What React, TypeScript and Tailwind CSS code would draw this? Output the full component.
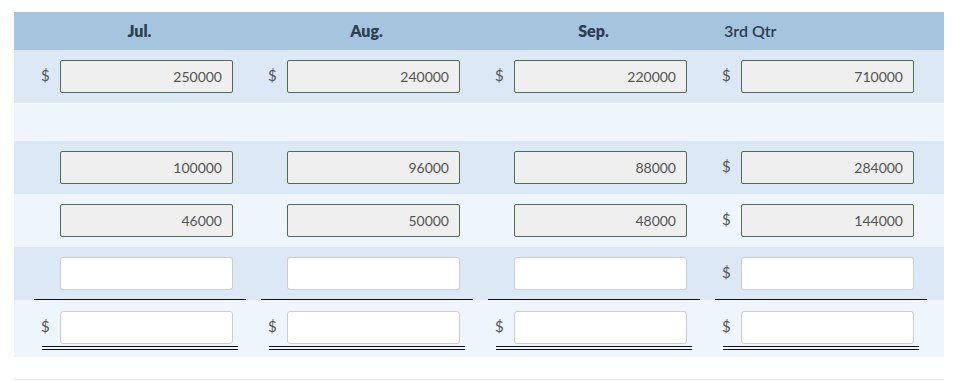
import React from "react";

type Cell = {
  dollar?: boolean;
  value?: string;
};

type Row = {
  cells: Cell[] | null;
  line?: "single" | "double";
  tone: "dark" | "light";
};

const months = ["Jul.", "Aug.", "Sep."];

const rows: Row[] = [
  {
    tone: "dark",
    cells: [
      { dollar: true, value: "250000" },
      { dollar: true, value: "240000" },
      { dollar: true, value: "220000" },
      { dollar: true, value: "710000" },
    ],
  },
  { tone: "light", cells: null },
  {
    tone: "dark",
    cells: [
      { value: "100000" },
      { value: "96000" },
      { value: "88000" },
      { dollar: true, value: "284000" },
    ],
  },
  {
    tone: "light",
    cells: [
      { value: "46000" },
      { value: "50000" },
      { value: "48000" },
      { dollar: true, value: "144000" },
    ],
  },
  {
    tone: "dark",
    line: "single",
    cells: [{}, {}, {}, { dollar: true }],
  },
  {
    tone: "light",
    line: "double",
    cells: [{ dollar: true }, { dollar: true }, { dollar: true }, { dollar: true }],
  },
];

function AmountField({ cell }: { cell: Cell }) {
  const filled = cell.value !== undefined;
  return (
    <div className="flex items-center h-[33px]">
      <span className="w-[34px] pl-[15px] text-[15px] text-[#555] -mt-[2px]">
        {cell.dollar ? "$" : ""}
      </span>
      {filled ? (
        <div className="w-[173px] h-[33px] bg-[#efefef] border border-[#4e6e54] rounded-[2px] flex items-center justify-end pr-[10px] text-[14px] text-[#555]">
          {cell.value}
        </div>
      ) : (
        <div className="w-[173px] h-[33px] bg-white border border-[#cdcdcd] rounded-[3px]" />
      )}
    </div>
  );
}

export default function App() {
  return (
    <div
      className="w-[953px] h-[381px] bg-white pt-[12px] pl-[14px]"
      style={{ fontFamily: "Lato, 'Open Sans', sans-serif" }}
    >
      <div className="w-[930px]">
        {/* HEADER */}
        <div className="h-[38px] bg-[#a5c5df] flex items-center pl-[12px] text-[#2c3e50] text-[16px]">
          {months.map((m) => (
            <div key={m} className="w-[227px] text-center font-extrabold">
              {m}
            </div>
          ))}
          <div className="w-[227px] pl-[17px] font-semibold">3rd Qtr</div>
        </div>

        {/* BODY */}
        {rows.map((row, i) => {
          const bg = row.tone === "dark" ? "bg-[#dce8f6]" : "bg-[#eef5fd]";
          if (!row.cells) {
            return <div key={i} className={`h-[38px] ${bg}`} />;
          }
          if (row.line === "double") {
            return (
              <div key={i} className={`h-[57px] ${bg} flex pl-[12px] pt-[11px]`}>
                {row.cells.map((c, j) => (
                  <div key={j} className="w-[227px] flex flex-col">
                    <AmountField cell={c} />
                    <div className="mt-[2px] ml-[16px] w-[196px] h-[4px] border-y border-[#111]" />
                  </div>
                ))}
              </div>
            );
          }
          if (row.line === "single") {
            return (
              <div key={i} className={`h-[53px] ${bg} flex pl-[12px] pt-[10px]`}>
                {row.cells.map((c, j) => (
                  <div key={j} className="w-[227px] flex flex-col">
                    <AmountField cell={c} />
                    <div className="mt-[9px] ml-[8px] w-[212px] h-px bg-[#111]" />
                  </div>
                ))}
              </div>
            );
          }
          return (
            <div key={i} className={`h-[53px] ${bg} flex pl-[12px] pt-[10px]`}>
              {row.cells.map((c, j) => (
                <div key={j} className="w-[227px]">
                  <AmountField cell={c} />
                </div>
              ))}
            </div>
          );
        })}
      </div>
      <div className="mt-[22px] w-[930px] h-px bg-[#e8e8e8]" />
    </div>
  );
}
